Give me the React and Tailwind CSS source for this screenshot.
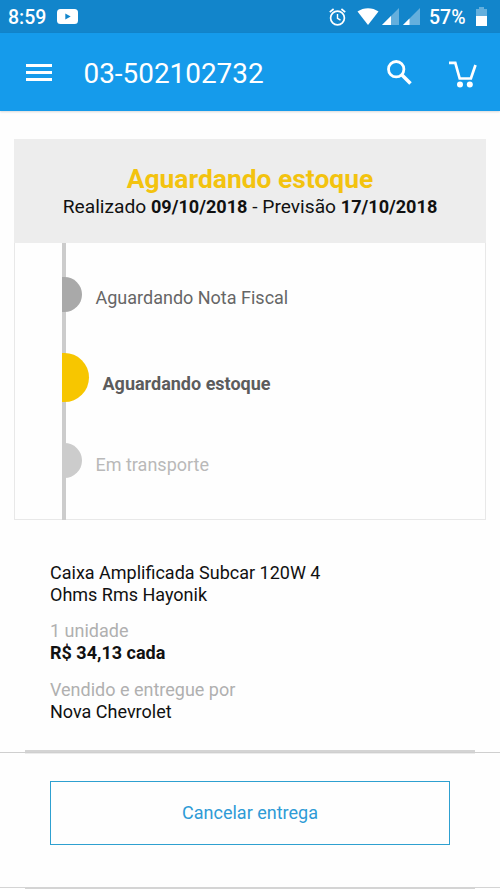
import React from 'react';

const steps = [
  {
    label: 'Aguardando Nota Fiscal',
    row: 'h-[76px]',
    dot: 'h-[35px] w-[19.5px] bg-[#a9a9a9]',
    text: 'pl-[14px] pt-[10px] text-[#666]',
  },
  {
    label: 'Aguardando estoque',
    row: 'h-[90px]',
    dot: 'h-[49px] w-[26.5px] bg-[#f7c600]',
    text: 'pl-[14px] pt-[20px] font-bold text-[#5c5c5c]',
  },
  {
    label: 'Em transporte',
    row: 'h-[76px]',
    dot: 'h-[35px] w-[19.5px] bg-[#ccc]',
    text: 'pl-[14px] pt-[11px] text-[#b9b9b9]',
  },
];

const StatusBar = () => (
  <div className="flex h-[33px] items-center bg-[#1285cb] text-[19.5px] font-medium leading-none text-white">
    <span className="ml-2 w-[49px] pt-[2px]">8:59</span>
    <svg className="h-[15px] w-[21px]" viewBox="0 0 21 15" fill="none">
      <rect width="21" height="15" rx="3.5" fill="#fff" />
      <path d="M8.3 4.4v6l5.4-3z" fill="#1285cb" />
    </svg>

    <svg className="ml-auto h-[18px] w-[17px]" viewBox="0 0 17 18" fill="none" stroke="#fff">
      <circle cx="8.5" cy="10" r="6.9" strokeWidth="1.7" />
      <path d="M8.5 6v4.4l3 1.8" strokeWidth="1.4" />
      <path d="M.8 4.2 4.6 1M16.2 4.2 12.4 1" strokeWidth="1.7" />
    </svg>
    <svg className="ml-[11px] h-[17px] w-[22px]" viewBox="0 0 22 17">
      <path d="M.5 3.5C6.5-1 15.5-1 21.5 3.5L11 17z" fill="#fff" />
    </svg>
    <svg className="ml-[3px] h-[17px] w-[17px]" viewBox="0 0 17 17">
      <path d="M17 0v17H0z" fill="#fff" fillOpacity=".35" />
      <path d="M9 8v9H0z" fill="#fff" />
    </svg>
    <svg className="ml-1 h-[17px] w-[17px]" viewBox="0 0 17 17">
      <path d="M17 0v17H0z" fill="#fff" fillOpacity=".35" />
      <path d="M6.5 10.5V17H0z" fill="#fff" />
    </svg>
    <span className="ml-[9px] w-[47px] pt-[2px]">57%</span>
    <svg className="mr-[13px] h-[19px] w-[11px]" viewBox="0 0 11 19">
      <path d="M3 0h5v2h3v7H0V2h3z" fill="#fff" fillOpacity=".35" />
      <path d="M0 9h11v10H0z" fill="#fff" />
    </svg>
  </div>
);

const Header = () => (
  <header className="flex h-[78px] items-center bg-[#159beb] text-white shadow-[0_1px_2px_rgba(0,0,0,0.15)]">
    <button className="ml-[26px] flex w-[26px] flex-col gap-1">
      <span className="h-[3px] bg-white" />
      <span className="h-[3px] bg-white" />
      <span className="h-[3px] bg-white" />
    </button>
    <h1 className="ml-[31.5px] pt-[3px] text-[27.9px] leading-none">03-502102732</h1>
    <svg className="ml-auto h-[25px] w-[25px]" viewBox="0 0 25 25" fill="none" stroke="#fff" strokeWidth="2.8">
      <circle cx="9.2" cy="9.2" r="7.7" />
      <path d="m14.5 14.5 9 9" strokeWidth="3.5" />
    </svg>
    <svg className="ml-[37px] mr-[23px] mt-[5px] h-[27px] w-[28px]" viewBox="0 0 28 27" fill="none">
      <path d="M0 1.8h6.3l4.4 15.7h11.2L26.5 4" stroke="#fff" strokeWidth="2.7" />
      <circle cx="11" cy="23.5" r="3" fill="#fff" />
      <circle cx="20.8" cy="23.5" r="3" fill="#fff" />
    </svg>
  </header>
);

const Timeline = () => (
  <ul className="ml-[47px] h-[277px] border-l-4 border-[#ccc] pt-[34px]">
    {steps.map((step) => (
      <li key={step.label} className={`flex items-start ${step.row}`}>
        <span className={`-ml-1 shrink-0 rounded-r-full ${step.dot}`} />
        <span className={`text-[18px] leading-[22px] ${step.text}`}>{step.label}</span>
      </li>
    ))}
  </ul>
);

const App = () => {
  return (
    <div className="h-[889px] w-[500px] overflow-hidden bg-[#fefefe] font-['Roboto',sans-serif] text-[#111]">
      <StatusBar />
      <Header />

      {/* Order status */}
      <section className="mx-[14px] mt-7 h-[381px] border-x border-b border-[#e8e8e8]">
        <div className="-mx-px h-[104px] bg-[#ededed] pt-[25px] text-center">
          <h2 className="text-[26.4px] font-bold leading-[31px] text-[#f3c30f]">Aguardando estoque</h2>
          <p className="pt-px text-[19.2px] leading-[22px]">
            Realizado <b className="text-[18.1px]">09/10/2018</b> - Previsão{' '}
            <b className="text-[18.1px]">17/10/2018</b>
          </p>
        </div>
        <Timeline />
      </section>

      {/* Product */}
      <section className="mt-[42px] h-[188px] px-[50px] text-[18px] leading-[22px]">
        <p className="w-[300px]">
          Caixa Amplificada Subcar 120W 4<br />
          Ohms Rms Hayonik
        </p>
        <p className="mt-[14px] text-[#b0b0b0]">1 unidade</p>
        <p className="font-bold">R$ 34,13 cada</p>
        <p className="mt-[15px] text-[#b0b0b0]">Vendido e entregue por</p>
        <p>Nova Chevrolet</p>
      </section>

      <div className="mx-[25px] h-[2px] bg-[#d4d4d4]" />
      <div className="h-px bg-[#cfcfcf]" />
      <div className="mx-[25px] h-px bg-[#ececec]" />

      {/* Actions */}
      <div className="h-[133px] px-[50px] pt-[27px]">
        <button className="h-16 w-full border border-[#2ea0d0] pb-[2px] text-[18px] text-[#2e9bd6]">
          Cancelar entrega
        </button>
      </div>
      <div className="h-px bg-[#d4d4d4]" />
      <div className="mx-[25px] h-px bg-[#d4d4d4]" />
    </div>
  );
};

export default App;
